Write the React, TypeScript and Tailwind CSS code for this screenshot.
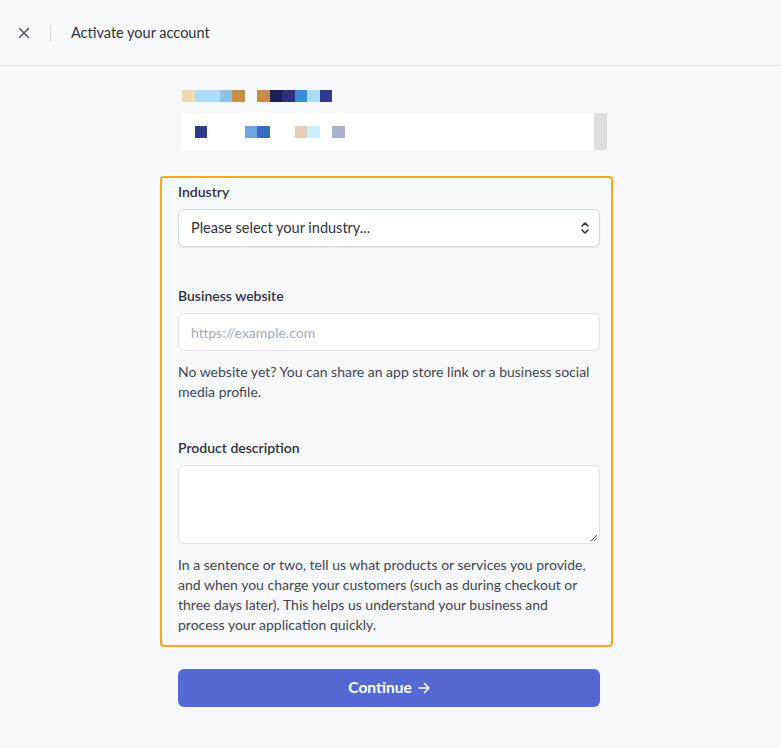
import React from "react";

const Pixels = ({ blocks }: { blocks: [number, string][] }) => (
    <div className="flex">
        {blocks.map(([w, c], i) => (
            <div key={i} className="h-[12px]" style={{ width: w, background: c }} />
        ))}
    </div>
);

const App = () => {
    return (
        <div className="min-h-[748px] bg-[#f7f8fa] text-[#30313d] font-['Lato','Open_Sans',sans-serif]">
            {/* header */}
            <div className="h-[66px] flex items-center border-b border-[#e3e6ea]">
                <button className="ml-[17px] w-[14px] h-[14px] flex items-center justify-center text-[#4f566b]">
                    <svg width="12" height="12" viewBox="0 0 12 12" fill="none" stroke="currentColor" strokeWidth="1.5" strokeLinecap="round">
                        <path d="M1.5 1.5l9 9M10.5 1.5l-9 9" />
                    </svg>
                </button>
                <div className="ml-[19px] w-px h-[16px] bg-[#d5d8de]" />
                <span className="ml-[20px] text-[14.5px] text-[#30313d]">Activate your account</span>
            </div>

            <div className="w-[423px] mx-auto pt-[24px]">
                {/* redacted account info */}
                <div className="pl-[3px]">
                    <Pixels
                        blocks={[
                            [13, "#f2d8b0"],
                            [25, "#a9ddf9"],
                            [12, "#8fc2ea"],
                            [13, "#c88f48"],
                            [12, "transparent"],
                            [13, "#c78c45"],
                            [12, "#1b1f5a"],
                            [13, "#2b2f7a"],
                            [12, "#3a8ed6"],
                            [13, "#a9ddf9"],
                            [12, "#2f3a8e"],
                        ]}
                    />
                </div>
                <div className="mt-[11px] ml-[2px] w-[426px] h-[37px] flex bg-white">
                    <div className="flex-1 pl-[14px] pt-[13px]">
                        <Pixels
                            blocks={[
                                [12, "#2f3990"],
                                [38, "transparent"],
                                [12, "#6fa3e2"],
                                [13, "#3a6cbf"],
                                [25, "transparent"],
                                [12, "#e5cbb8"],
                                [13, "#c9effb"],
                                [12, "transparent"],
                                [13, "#a6b3cb"],
                            ]}
                        />
                    </div>
                    <div className="w-[13px] bg-[#dcdee1]" />
                </div>
            </div>

            {/* highlighted form */}
            <div className="w-[453px] ml-[160px] mt-[26px] border-[2.5px] border-[#f5a81c] rounded-[4px] pl-[16px] pr-[11px] pt-[4px] pb-[10px]">
                <label className="block text-[14px] font-semibold leading-[20px]">Industry</label>
                <div className="mt-[7px] h-[38px] bg-white rounded-[6px] border border-[#d5d9e0] shadow-[0_1px_1px_rgba(0,0,0,0.08)] flex items-center justify-between pl-[12px] pr-[8px]">
                    <span className="text-[14.5px] text-[#30313d]">Please select your industry...</span>
                    <svg width="12" height="14" viewBox="0 0 12 14" fill="none" stroke="#30313d" strokeWidth="1.5" strokeLinecap="round" strokeLinejoin="round">
                        <path d="M3 5l3-3 3 3M3 9l3 3 3-3" />
                    </svg>
                </div>

                <label className="block mt-[39px] text-[14px] font-semibold leading-[20px]">Business website</label>
                <div className="mt-[7px] h-[38px] bg-white rounded-[6px] border border-[#e0e3e8] flex items-center pl-[12px]">
                    <span className="text-[14px] text-[#a3acb9]">https://example.com</span>
                </div>
                <p className="mt-[11px] pr-[6px] text-[14px] leading-[20px] text-[#414552]">
                    No website yet? You can share an app store link or a business social media profile.
                </p>

                <label className="block mt-[36px] text-[14px] font-semibold leading-[20px]">Product description</label>
                <div className="relative mt-[7px] h-[79px] bg-white rounded-[6px] border border-[#e0e3e8]">
                    <svg className="absolute right-[1px] bottom-[1px]" width="9" height="9" viewBox="0 0 9 9" stroke="#555" strokeWidth="1">
                        <path d="M8 2L2 8M8 5L5 8" />
                    </svg>
                </div>
                <p className="mt-[11px] pr-[6px] text-[14px] leading-[20px] text-[#414552]">
                    In a sentence or two, tell us what products or services you provide, and when you charge your customers (such as during checkout or three days later). This helps us understand your business and process your application quickly.
                </p>
            </div>

            <div className="ml-[178px] w-[422px] mt-[22px]">
                <button className="w-full h-[38px] rounded-[6px] bg-[#5469d4] text-white text-[15.5px] font-bold flex items-center justify-center gap-[6px]">
                    Continue
                    <svg width="12" height="12" viewBox="0 0 12 12" fill="none" stroke="currentColor" strokeWidth="1.5" strokeLinecap="round" strokeLinejoin="round">
                        <path d="M1 6h10M6.5 1.5L11 6l-4.5 4.5" />
                    </svg>
                </button>
            </div>
        </div>
    );
};

export default App;
